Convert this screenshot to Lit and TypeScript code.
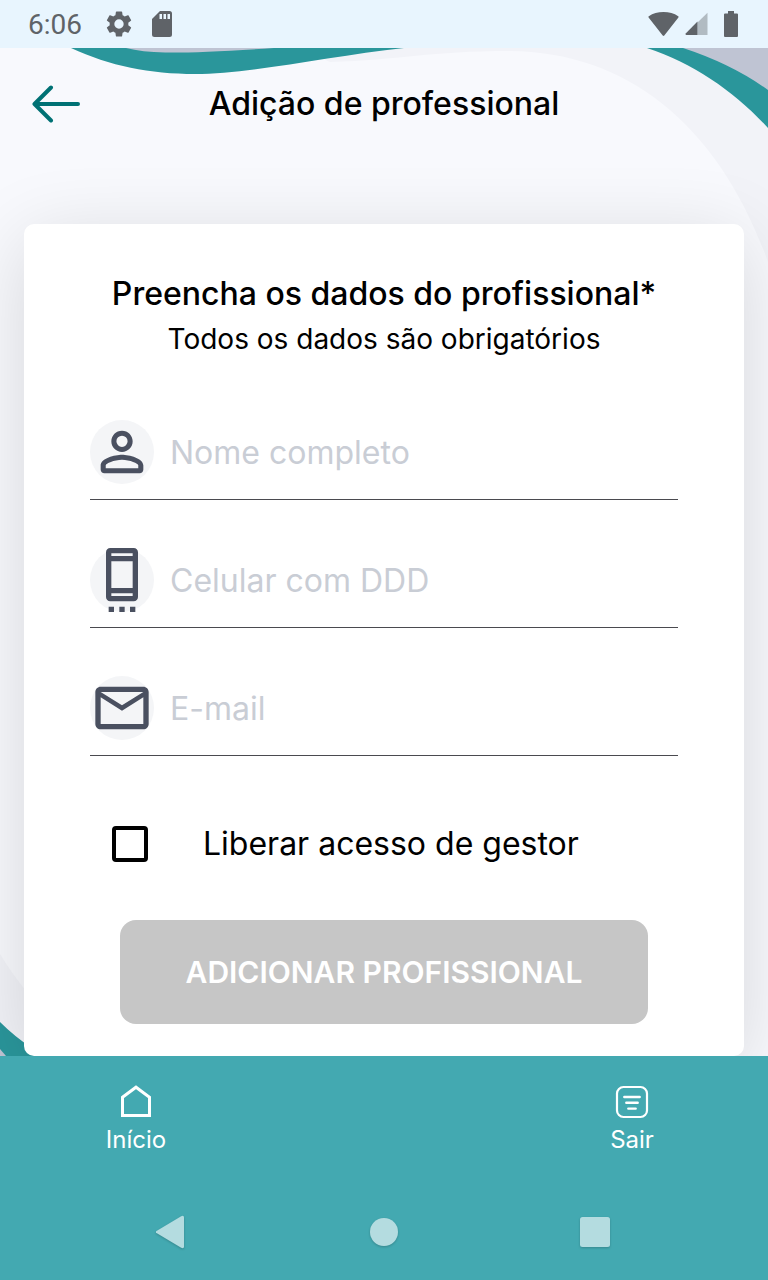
import { LitElement, html, css, svg } from "lit";
import { customElement, property, state } from "lit/decorators.js";

const person = svg`<path d="M12 5.9a2.1 2.1 0 1 1 0 4.2 2.1 2.1 0 0 1 0-4.2m0 9c2.97 0 6.1 1.46 6.1 2.1v1.1H5.9V17c0-.64 3.13-2.1 6.1-2.1M12 4C9.79 4 8 5.79 8 8s1.79 4 4 4 4-1.79 4-4-1.79-4-4-4zm0 9c-2.67 0-8 1.34-8 4v1.6c0 .8.6 1.4 1.4 1.4h13.2c.8 0 1.4-.6 1.4-1.4V17c0-2.66-5.33-4-8-4z"/>`;
const phone = svg`<path d="M7 22h2v2H7zM11 22h2v2h-2zM15 22h2v2h-2zM16.4 0H7.6C6.7 0 6 .7 6 1.6v16.8c0 .9.7 1.6 1.6 1.6h8.8c.9 0 1.6-.7 1.6-1.6V1.6C18 .7 17.3 0 16.4 0zM16 18H8v-1h8v1zm0-3H8V5h8v10zm0-12H8V2h8v1z"/>`;
const mail = svg`<path d="M22 6c0-1.1-.9-2-2-2H4c-1.1 0-2 .9-2 2v12c0 1.1.9 2 2 2h16c1.1 0 2-.9 2-2V6zm-2 0l-8 5-8-5h16zm0 12H4V8l8 5 8-5v10z"/>`;

@customElement("status-bar")
class StatusBar extends LitElement {
  static styles = css`
    :host {
      display: flex;
      align-items: center;
      height: 48px;
      padding: 0 30px 0 28px;
      background: #e8f5fe;
      color: #5f6368;
      font: 400 28px/32px Roboto, sans-serif;
    }
    .time { margin-right: 24px; padding-top: 2px; }
    .icons { display: flex; align-items: center; flex: 1; gap: 20px; }
    .right { justify-content: flex-end; gap: 6px; }
    .battery { margin-left: 10px; }
    svg { display: block; fill: currentColor; }
  `;
  render() {
    return html`
      <span class="time">6:06</span>
      <div class="icons">
        <svg width="26" height="26" viewBox="2 2 20 20"><path d="M19.14 12.94c.04-.3.06-.61.06-.94 0-.32-.02-.64-.07-.94l2.03-1.58c.18-.14.23-.41.12-.61l-1.92-3.32c-.12-.22-.37-.29-.59-.22l-2.39.96c-.5-.38-1.03-.7-1.62-.94L14.4 2.81c-.04-.24-.24-.41-.48-.41h-3.84c-.24 0-.43.17-.47.41l-.36 2.54c-.59.24-1.13.57-1.62.94l-2.39-.96c-.22-.08-.47 0-.59.22L2.74 8.87c-.12.21-.08.47.12.61l2.03 1.58c-.05.3-.09.63-.09.94s.02.64.07.94l-2.03 1.58c-.18.14-.23.41-.12.61l1.92 3.32c.12.22.37.29.59.22l2.39-.96c.5.38 1.03.7 1.62.94l.36 2.54c.05.24.24.41.48.41h3.84c.24 0 .44-.17.47-.41l.36-2.54c.59-.24 1.13-.56 1.62-.94l2.39.96c.22.08.47 0 .59-.22l1.92-3.32c.12-.22.07-.47-.12-.61l-2.01-1.58zM12 15.6A3.6 3.6 0 1 1 12 8.4a3.6 3.6 0 0 1 0 7.2z"/></svg>
        <svg width="20" height="26" viewBox="0 0 20 26"><path fill-rule="evenodd" d="M8 0h9.500a2.500 2.500 0 0 1 2.500 2.500v21a2.500 2.500 0 0 1-2.500 2.500h-15A2.500 2.500 0 0 1 0 23.500V8zM7.500 3v5h2.500V3zm4 0v5h2.500V3zm4 0v5h2.500V3z"/></svg>
      </div>
      <div class="icons right">
        <svg width="31" height="25" viewBox="0 0 31 25"><path d="M.6 5.500Q0 4.800.8 4.200 7 0 15.500 0T30.200 4.200q.8.600.2 1.300L16.300 23.600q-.8.800-1.600 0z"/></svg>
        <svg width="23" height="24" viewBox="0 0 23 24"><path opacity=".4" d="M12.500 10.500 22.500.8V23h-10z"/><path d="M12.500 9.500V23H1.300Q0 22.500.7 21.500z"/></svg>
        <svg class="battery" width="14" height="26" viewBox="0 0 14 26"><path d="M4 0h6v2.600h3q1 0 1 1V25q0 1-1 1H1q-1 0-1-1V3.600q0-1 1-1h3z"/></svg>
      </div>
    `;
  }
}

@customElement("form-field")
class FormField extends LitElement {
  @property() label = "";
  @property() type = "text";
  @property({ attribute: false }) icon: unknown;
  static styles = css`
    :host { display: block; }
    .row {
      display: flex;
      align-items: flex-start;
      gap: 16px;
      height: 79px;
      border-bottom: 1px solid #4a4a4f;
    }
    .badge { flex: none; border-radius: 50%; background: #f4f5f7; }
    svg { display: block; width: 64px; height: 64px; fill: #4a5060; }
    input {
      flex: 1;
      min-width: 0;
      height: 64px;
      padding: 0;
      border: 0;
      outline: 0;
      background: none;
      color: #000;
      font: 400 32px/40px Inter, sans-serif;
    }
    input::placeholder { color: #c9cdd5; opacity: 1; }
  `;
  render() {
    return html`
      <div class="row">
        <label class="badge" for="field" aria-label=${this.label}>
          <svg viewBox="0 0 24 24" aria-hidden="true">${this.icon}</svg>
        </label>
        <input id="field" type=${this.type} placeholder=${this.label} />
      </div>
    `;
  }
}

@customElement("bottom-nav")
class BottomNav extends LitElement {
  static styles = css`
    :host { display: block; background: #43a9b1; color: #fff; }
    .tabs {
      display: flex;
      justify-content: space-between;
      height: 128px;
      padding: 0 72px;
      box-sizing: border-box;
    }
    .tab {
      display: flex;
      flex-direction: column;
      align-items: center;
      gap: 6px;
      width: 128px;
      padding-top: 28px;
      color: inherit;
      text-decoration: none;
      font: 400 24px/28px Inter, sans-serif;
    }
    .tab svg { display: block; fill: none; stroke: #fff; }
    .system {
      display: grid;
      grid-template-columns: repeat(3, 1fr);
      height: 96px;
      padding: 0 66px;
    }
    .key {
      display: grid;
      place-items: center;
      padding: 0;
      border: 0;
      background: none;
    }
    .key svg {
      display: block;
      fill: #b4dce0;
      filter: drop-shadow(0 1px 1px rgb(0 0 0 / 0.2));
    }
  `;
  render() {
    return html`
      <nav class="tabs">
        <a class="tab" href="#inicio">
          <svg width="36" height="36" viewBox="0 0 36 36"><path stroke-width="3" d="M4.500 13.200 18 3.200l13.500 10V31.500h-27z"/></svg>
          Início
        </a>
        <a class="tab" href="#sair">
          <svg width="36" height="36" viewBox="0 0 36 36"><rect x="3" y="3" width="30" height="30" rx="6.500" stroke-width="2.200"/><path stroke-width="2.400" stroke-linecap="round" d="M10.300 13h15.400M12.300 18.800h11.400M14.300 24.600h7.400"/></svg>
          Sair
        </a>
      </nav>
      <div class="system">
        <button class="key" aria-label="Voltar"><svg width="32" height="34" viewBox="0 0 32 34"><path d="M.5 15.900 25.200 1.300Q28 0 28 2.500v29q0 2.500-2.800 1.200L.5 18.100q-2-1.100 0-2.200z"/></svg></button>
        <button class="key" aria-label="Tela inicial"><svg width="28" height="28" viewBox="0 0 28 28"><circle cx="14" cy="14" r="14"/></svg></button>
        <button class="key" aria-label="Recentes"><svg width="32" height="30" viewBox="0 0 32 30"><rect width="30" height="30" rx="2.500"/></svg></button>
      </div>
    `;
  }
}

@customElement("app-root")
class AppRoot extends LitElement {
  @state() private manager = false;
  static styles = css`
    :host {
      display: flex;
      flex-direction: column;
      min-height: 100vh;
      background: #f8f9fd;
      color: #000;
      font-family: Inter, sans-serif;
    }
    .stage { display: grid; flex: 1; overflow: hidden; }
    .waves, .content { grid-area: 1 / 1; min-width: 0; }
    .waves { width: 100%; height: 0; min-height: 100%; }
    .content { display: flex; flex-direction: column; z-index: 1; }
    .top {
      display: grid;
      grid-template-columns: 48px 1fr 48px;
      align-items: center;
      height: 112px;
      padding: 0 32px;
    }
    .back { padding: 0; border: 0; background: none; }
    .back svg { display: block; }
    h1, h2, p { margin: 0; text-align: center; }
    h1, h2 { font-weight: 500; font-size: 32px; line-height: 40px; }
    .card {
      flex: 1;
      margin: 64px 24px 0;
      padding: 50px 66px 32px;
      border-radius: 10px;
      background: #fff;
      box-shadow: 0 16px 80px rgb(0 0 0 / 0.14);
    }
    p { font-size: 28px; line-height: 50px; }
    .fields { display: grid; gap: 48px; margin-top: 56px; }
    .check {
      display: flex;
      align-items: center;
      gap: 55px;
      height: 64px;
      margin-top: 56px;
      padding-left: 22px;
      font-size: 32px;
      line-height: 40px;
    }
    .check input {
      appearance: none;
      flex: none;
      width: 36px;
      height: 36px;
      margin: 0;
      border: 4px solid #000;
      border-radius: 4px;
    }
    .check input:checked { background: #2a969b; }
    .submit {
      display: block;
      width: calc(100% - 60px);
      height: 104px;
      margin: 44px 30px 0;
      padding: 0;
      border: 0;
      border-radius: 16px;
      background: #c6c6c6;
      color: #fff;
      font: 600 30px/40px Inter, sans-serif;
    }
  `;
  render() {
    return html`
      <status-bar></status-bar>
      <div class="stage">
        <svg class="waves" viewBox="0 48 768 1008" preserveAspectRatio="none" aria-hidden="true">
          <path fill="#f2f3f8" d="M300 48H768V262C720 128 630 52 510 51 430 51 400 60 330 62z"/>
          <path fill="#2a969b" d="M71 48C110 66 150 74 195 74 250 74 330 56 404 48z"/>
          <path fill="#bfc4d3" d="M126 48Q142 52 165 52.500 200 53 274 48z"/>
          <path fill="#2a969b" d="M647 48C695 64 735 92 768 128V48z"/>
          <path fill="#bfc4d3" d="M683 48Q732 64 768 90V48z"/>
          <path fill="#f2f3f8" d="M0 954Q12 974 30 996L60 1056H0z"/>
          <path fill="#2a969b" d="M0 1022Q15 1037 32 1048L50 1056H0z"/>
          <path fill="#bfc4d3" d="M0 1049 6 1056H0z"/>
        </svg>
        <main class="content">
          <header class="top">
            <button class="back" aria-label="Voltar">
              <svg width="48" height="40" viewBox="0 0 48 40" fill="none" stroke="#007174" stroke-width="4" stroke-linecap="round" stroke-linejoin="round"><path d="M46 20H3M19 3.500 2.500 20 19 36.500"/></svg>
            </button>
            <h1>Adição de professional</h1>
          </header>
          <form class="card">
            <h2>Preencha os dados do profissional*</h2>
            <p>Todos os dados são obrigatórios</p>
            <div class="fields">
              <form-field label="Nome completo" .icon=${person}></form-field>
              <form-field label="Celular com DDD" type="tel" .icon=${phone}></form-field>
              <form-field label="E-mail" type="email" .icon=${mail}></form-field>
            </div>
            <label class="check">
              <input
                type="checkbox"
                .checked=${this.manager}
                @change=${(e: Event) => (this.manager = (e.target as HTMLInputElement).checked)}
              />
              Liberar acesso de gestor
            </label>
            <button class="submit" type="button" disabled>ADICIONAR PROFISSIONAL</button>
          </form>
        </main>
      </div>
      <bottom-nav></bottom-nav>
    `;
  }
}
